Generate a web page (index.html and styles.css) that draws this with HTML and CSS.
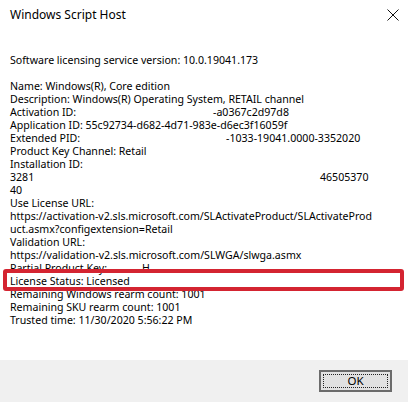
FILE: index.html
```html
<!DOCTYPE html>
<html>
<head>
<meta charset="utf-8">
<link rel="stylesheet" href="styles.css">
</head>
<body>
<div class="dialog">
  <div class="titlebar">
    <span class="title">Windows Script Host</span>
    <svg class="close" width="12" height="12" viewBox="0 0 12 12"><path d="M0.5 0.5 L11.5 11.5 M11.5 0.5 L0.5 11.5" stroke="#111" stroke-width="1" fill="none"/></svg>
  </div>
  <div class="content">
    <div class="line">Software licensing service version: 10.0.19041.173</div>
    <div class="line">&nbsp;</div>
    <div class="line">Name: Windows(R), Core edition</div>
    <div class="line">Description: Windows(R) Operating System, RETAIL channel</div>
    <div class="line split"><span class="lbl w-act">Activation ID:</span><span>-a0367c2d97d8</span></div>
    <div class="line">Application ID: 55c92734-d682-4d71-983e-d6ec3f16059f</div>
    <div class="line split"><span class="lbl w-ext">Extended PID:</span><span>-1033-19041.0000-3352020</span></div>
    <div class="line">Product Key Channel: Retail</div>
    <div class="line">Installation ID:</div>
    <div class="line split"><span class="lbl w-inst">3281</span><span>46505370</span></div>
    <div class="line">40</div>
    <div class="line">Use License URL:</div>
    <div class="line">https://activation-v2.sls.microsoft.com/SLActivateProduct/SLActivateProd</div>
    <div class="line">uct.asmx?configextension=Retail</div>
    <div class="line">Validation URL:</div>
    <div class="line">https://validation-v2.sls.microsoft.com/SLWGA/slwga.asmx</div>
    <div class="line split"><span class="lbl w-ppk">Partial Product Key:</span><span>H</span></div>
    <div class="line">License Status: Licensed</div>
    <div class="line">Remaining Windows rearm count: 1001</div>
    <div class="line">Remaining SKU rearm count: 1001</div>
    <div class="line">Trusted time: 11/30/2020 5:56:22 PM</div>
  </div>
  <div class="footer">
    <button class="ok"><span class="focus">OK</span></button>
  </div>
  <div class="highlight"></div>
</div>
</body>
</html>
```
FILE: styles.css
```css
html, body {
  margin: 0;
  padding: 0;
  background: #ffffff;
}
.dialog {
  position: relative;
  width: 408px;
  height: 402px;
  display: flex;
  flex-direction: column;
  background: #ffffff;
  font-family: "Noto Sans", "Open Sans", "DejaVu Sans", sans-serif;
  color: #000000;
  overflow: hidden;
}
.titlebar {
  height: 28px;
  display: flex;
  align-items: center;
  justify-content: space-between;
  padding: 0 9px 0 10px;
  flex: none;
}
.title {
  font-size: 12px;
  color: #000;
}
.close {
  margin-top: 1px;
}
.content {
  flex: 1;
  padding: 26px 0 0 10px;
  font-size: 10.6px;
  line-height: 13px;
}
.line {
  white-space: nowrap;
  height: 13px;
}
.split {
  display: flex;
}
.lbl {
  display: inline-block;
  flex: none;
}
.w-act { width: 203px; }
.w-ext { width: 216px; }
.w-inst { width: 310px; }
.w-ppk { width: 132px; }
.footer {
  flex: none;
  height: 42px;
  background: #f0f0f0;
  display: flex;
  justify-content: flex-end;
  align-items: flex-start;
  padding: 10px 16px 0 0;
  box-sizing: border-box;
}
.ok {
  width: 73px;
  height: 22px;
  box-sizing: border-box;
  border: 2px solid #6b6b6b;
  background: #e1e1e1;
  padding: 2px;
  margin: 0;
  display: flex;
  font-family: "Noto Sans", "Open Sans", sans-serif;
  font-size: 11.5px;
  color: #000;
}
.focus {
  flex: 1;
  border: 1px dotted #222;
  display: flex;
  align-items: center;
  justify-content: center;
  line-height: 1;
}
.highlight {
  position: absolute;
  left: 3px;
  top: 269px;
  width: 401px;
  height: 22px;
  box-sizing: border-box;
  border: 4px solid #d42431;
  border-radius: 3px;
}
```
